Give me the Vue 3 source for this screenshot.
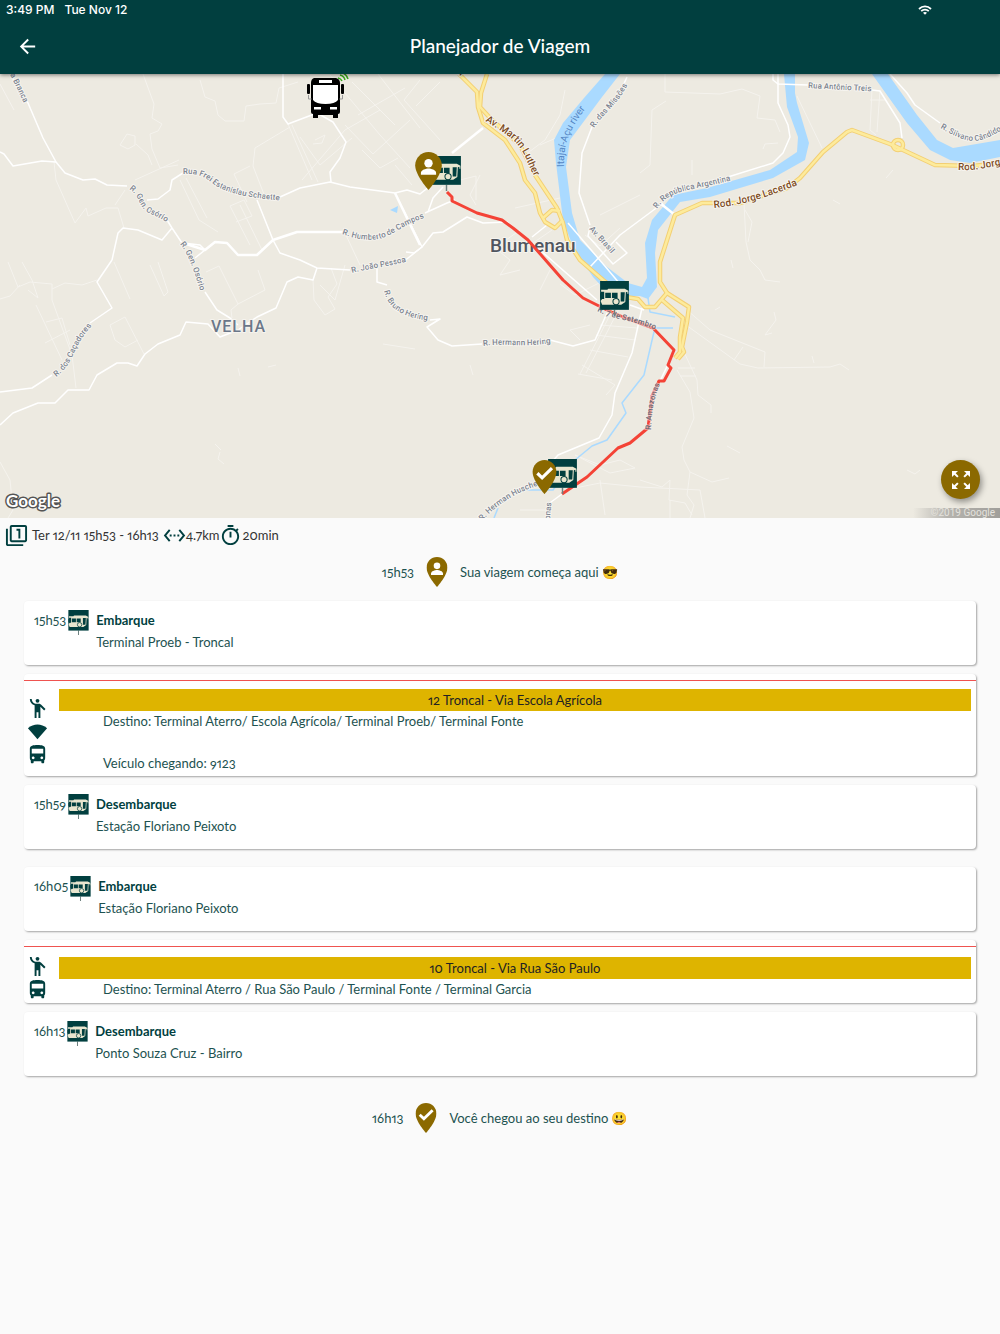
<script setup>
import {ref} from "vue";

const TEAL = '#013f3f'

const summary = ref({date: 'Ter 12/11 15h53 - 16h13', distance: '4.7km', duration: '20min'})

const legs = ref([
  {
    from: {time: '15h53', kind: 'Embarque', place: 'Terminal Proeb - Troncal'},
    line: '12 Troncal - Via Escola Agrícola',
    destination: 'Destino: Terminal Aterro/ Escola Agrícola/ Terminal Proeb/ Terminal Fonte',
    vehicle: 'Veículo chegando: 9123',
    to: {time: '15h59', kind: 'Desembarque', place: 'Estação Floriano Peixoto'},
  },
  {
    from: {time: '16h05', kind: 'Embarque', place: 'Estação Floriano Peixoto'},
    line: '10 Troncal - Via Rua São Paulo',
    destination: 'Destino: Terminal Aterro / Rua São Paulo / Terminal Fonte / Terminal Garcia',
    vehicle: null,
    to: {time: '16h13', kind: 'Desembarque', place: 'Ponto Souza Cruz - Bairro'},
  },
])

const rivers = [
  'M605 74L584 98L563 123L554 140L556 163L563 220L573 247L593 277L605 290L620 296L640 296L648 299L657 287L655 253L658 230L680 202L710 197L773 178L805 160L809 143L797 103L795 93L795 74H784L787 107L798 137L797 152L770 170L707 188L673 195L652 220L645 243L647 278L642 287L628 283L607 267L580 240L572 213L566 167L570 140L602 97L620 74Z',
  'M872 74L907 123L930 150L950 160L970 163L1000 157V140L953 148L937 140L917 115L888 74Z',
  'M390 210L398 206L397 213Z',
]

const streams = [
  'M648 298L650 312L675 317', 'M673 328L655 328L653 336L644 375L622 403L626 413L607 440L592 446L575 460L553 490L527 490', 'M498 508L494 518',
]

// unnamed streets, barely lighter than the ground
const lanes = [
  'M143 74L154 104L152 118L162 124L158 131L150 134L152 149L160 168L178 165',
  'M135 180L179 160', 'M120 145L127 134L135 136L135 145L128 149Z', 'M136 144L148 155L152 165',
  'M54 162L56 180L75 223L86 208L88 216L106 208L118 208L124 228', 'M125 190L115 205',
  'M200 80L205 97L215 101L218 115L225 121H244L246 106L260 104L276 103L279 88L298 82',
  'M288 124L312 180', 'M292 125L318 182', 'M290 127L255 148L253 166L265 197', 'M250 166L234 174L247 202',
  'M180 180L199 220L218 232', 'M186 178L207 218', 'M230 206L250 245', 'M240 205L262 250', 'M230 206L244 200L252 216L236 222',
  'M300 137L320 165L352 138', 'M315 140L325 135L322 143L313 144', 'M302 180L345 130L380 110',
  'M330 75L380 135L410 168', 'M352 82L395 125', 'M358 115L405 88', 'M378 74L420 128', 'M345 125L373 154L410 120',
  'M362 150L380 168L398 158', 'M420 80L404 100L440 140', 'M440 82L416 106', 'M395 165L412 185',
  'M0 84L14 110', 'M8 262L18 287L30 282L52 284L52 300L72 355L76 388', 'M52 289L65 283L82 285L97 280', 'M0 299L10 296L20 285',
  'M36 305L62 360', 'M46 322L62 318L70 345', 'M45 343L70 330', 'M22 262L32 280L38 298L28 290',
  'M110 325L125 317L144 354', 'M110 325L115 340L125 347L138 340', 'M114 262L130 299', 'M150 265L164 296L168 292L158 262',
  'M206 272L219 266L238 304L265 290L258 270', 'M238 304L231 310L232 318', 'M313 280L314 300L325 315L335 309L328 297L337 284L331 268',
  'M345 233L360 265', 'M345 265L335 300L320 285', 'M0 462L10 480L13 510L8 518', 'M215 444L221 450', 'M220 452L218 459L224 464',
  'M238 368L240 376', 'M268 367L276 365', 'M383 344L415 349', 'M470 365L473 375',
  'M580 374L615 305', 'M586 373L620 307', 'M578 374L612 380', 'M582 365L615 385L606 395', 'M590 350L628 357', 'M596 335L635 340', 'M600 325L637 328',
  'M590 325L570 330L580 340', 'M560 284L575 295L605 280', 'M520 230L495 248L510 260L500 275L520 270', 'M550 270L540 290',
  'M565 490L600 483L640 487L700 490L705 518', 'M575 455L600 465L620 460L635 468L610 473Z', 'M600 480L605 515', 'M520 510H550V518',
  'M640 480L662 487L670 480L669 500L685 503L692 515', 'M670 500V518', 'M687 310L710 330L765 352L764 367', 'M686 325L740 364L758 368L830 367L840 364L849 370',
  'M743 347L734 360', 'M812 356L814 363', 'M774 312L776 320L765 335L772 333', 'M715 310L720 307', 'M678 368H695', 'M680 376H696',
  'M677 370L690 392L694 418L682 447L684 460L690 472L687 495L694 505L690 518', 'M684 352L697 380L698 395L711 405V413', 'M690 472L712 482L729 478',
  'M665 74V92L720 94L742 89L760 96L757 118L775 120L780 132', 'M666 101L652 110L650 165L640 173', 'M763 149L765 144L778 143',
  'M797 96L822 148', 'M872 90L870 130L876 135', 'M880 90L877 132', 'M870 100H885', 'M744 203L746 242L750 260L760 270L765 280L780 282', 'M745 210L752 222L748 242',
  'M886 178L893 170', 'M833 200L840 204', 'M692 160V175', 'M731 260L733 268', 'M727 446L740 453', 'M907 470L915 474L920 470',
  'M540 145L556 138', 'M525 155L545 140L560 115L565 90', 'M515 208L560 198', 'M480 175L470 195L476 205', 'M460 180L476 176V200',
  'M552 230L530 245', 'M585 235L600 246L620 228', 'M600 215L640 195',
]

const streets = [
  'M10 74L28 103L43 138L56 162L65 173L83 180L95 179L107 185L127 186', 'M0 152L4 154L13 166L42 161L56 162',
  'M147 200L158 199L170 190L172 180L183 173', 'M280 197L300 188L330 182L350 187L395 193L407 190L420 194L430 186',
  'M283 74V117L288 124L317 113L333 122L346 142L340 158L330 172L331 182', 'M257 200L273 240L280 253L300 260L317 268L350 270',
  'M403 262L422 247L433 233L443 232L467 217L483 223L507 222L540 250L597 300', 'M183 243L200 245L205 250L195 258', 'M167 220L172 228L182 243',
  'M425 213L447 203L455 200', 'M395 193L422 247L414 253L406 252', 'M428 212L433 198L443 187',
  'M112 260L118 233L123 228L138 230L162 240L172 228', 'M112 260L97 282L112 308L90 323', 'M52 375L32 388L0 392',
  'M205 292L217 310L230 318L238 325', 'M317 268L313 280L298 277L287 282L276 308L257 317L238 330L220 337L208 324L186 322L180 335L158 344L145 354L137 366L128 363H117L97 375L89 390H68L55 403H38L13 413L0 425',
  'M377 267V282L387 285', 'M430 320L440 319L427 327L438 340L452 346L482 344', 'M550 340L573 346L595 340L607 313',
  'M642 308L632 353L615 393L612 415L599 438L558 455L545 470', 'M547 505L562 494', 'M627 77L622 88', 'M592 127L582 153L579 193L590 225',
  'M590 267L620 235L663 203', 'M590 227L588 236L613 264L627 253L616 242', 'M728 177L773 163L783 153L790 137L788 125L778 103V74', 'M773 74V80L778 84L808 85',
  'M872 90L880 91L900 123L902 138', 'M890 74L907 93L915 105L940 123', 'M568 223L604 265L625 290', 'M547 225L532 237', 'M660 381L674 352', 'M630 305L644 310',
]

const avenues = [
  'M183 243L205 250L215 242L227 243L238 255H257L273 240L297 232L343 232', 'M395 193L420 245', 'M452 153L483 128', 'M660 203L675 215',
]

const highways = [
  'M459 74L477 92L478 107L483 123L505 140L520 163L525 180L535 193L540 213L545 222L555 228L563 220',
  'M487 74L481 93L480 107L492 120L520 145L535 175L557 208L563 223L567 240L580 260L603 280L626 297L638 299L645 307H655L667 293L660 282V262L675 215L702 203L740 203L787 188L800 178L823 152L847 132L852 130L890 144L903 150L935 165L973 166L1000 163',
  'M543 218L552 210L560 211', 'M667 293L689 307L687 322L682 347L684 352L678 359', 'M662 300L683 318L680 337L680 352L675 358', 'M893 145A5 5 0 1 1 903 145A5 5 0 1 1 893 145',
]

const route = 'M447 192L452 197V201L477 213L502 220L513 228L528 240L563 280L583 298L607 310L623 317L653 328L674 350L668 365L671 368L664 381H659L652 396L648 428L630 443L618 448L587 477L562 494'

const labels = [
  {text: 'ua Branca', d: 'M8 71C14 82 19 92 26 108', kind: 'street'},
  {text: 'R. Gen. Osório', d: 'M129 189C140 196 138 205 147 212C153 216 160 216 172 227', kind: 'street'},
  {text: 'R. Gen. Osório', d: 'M180 244C187 252 193 266 203 300', kind: 'street'},
  {text: 'Rua Frei Estanislau Schaette', d: 'M183 174C200 173 206 178 216 186C234 196 256 198 285 201', kind: 'street'},
  {text: 'R. Humberto de Campos', d: 'M342 234C362 241 378 243 395 232C408 224 418 220 434 214', kind: 'street'},
  {text: 'R. João Pessoa', d: 'M352 273C370 268 388 267 412 260', kind: 'street'},
  {text: 'R. Bruno Hering', d: 'M384 291C388 308 402 320 440 321', kind: 'street'},
  {text: 'R. Hermann Hering', d: 'M483 346C510 342 515 349 560 342', kind: 'street'},
  {text: 'R. dos Caçadores', d: 'M56 377C78 360 70 345 99 319', kind: 'street'},
  {text: 'R. das Missões', d: 'M594 128C606 110 618 106 631 78', kind: 'street'},
  {text: 'Av. Brasil', d: 'M589 229C596 238 603 243 618 262', kind: 'street'},
  {text: 'R. República Argentina', d: 'M657 209C670 188 690 192 740 178', kind: 'street'},
  {text: 'Rua Antônio Treis', d: 'M808 88L885 92', kind: 'street'},
  {text: 'R. Silvano Cândido', d: 'M940 128C975 148 980 144 1016 121', kind: 'street'},
  {text: 'R. Herman Huscher', d: 'M482 521C500 502 518 490 552 482', kind: 'street'},
  {text: 'onas', d: 'M550 520L552 494', kind: 'street'},
  {text: 'R. 7 de Setembro', d: 'M597 311C615 321 637 319 668 336', kind: 'over_route'},
  {text: 'R. Amazonas', d: 'M651 430C652 412 652 400 666 370', kind: 'over_route'},
  {text: 'Av. Martin Luther', d: 'M485 121C510 136 518 142 525 156C530 168 530 168 542 192', kind: 'highway'},
  {text: 'er', d: 'M455 71L472 86', kind: 'highway'},
  {text: 'Rod. Jorge Lacerda', d: 'M714 208C750 204 770 196 810 180', kind: 'highway'},
  {text: 'Rod. Jorge', d: 'M958 170C980 171 990 166 1014 163', kind: 'highway'},
  {text: 'Itajaí-Açu river', d: 'M564 167C563 140 572 126 594 97', kind: 'water'},
]
</script>

<template>
  <!-- shared shapes -->
  <svg class="symbols" aria-hidden="true">
    <symbol id="stop" viewBox="0 0 28 34">
      <path d="M14 28v6" stroke="#6f8280" stroke-width="1.4"/>
      <rect width="28" height="28" :fill="TEAL"/>
      <path d="M1 8.500h6l1-1h16l3.500 2v3h-1v-2l-1.500.500-.500 9.500-4 2.500H2l-1.500-3.500 1.500-2h2V10.500H1z" fill="#e9e6cf"/>
      <path d="M0 12h3v5H0zM5 11.500h5.500v5H5zM11.500 11.500h5.500v5h-5.500zM20 11h4l-.500 9H20z" :fill="TEAL"/>
      <circle cx="15.500" cy="20" r="3" fill="#e9e6cf" :stroke="TEAL"/>
    </symbol>
    <symbol id="pin-person" viewBox="0 0 14 20">
      <path d="M7 0C3.140 0 0 3.140 0 7c0 5.250 7 13 7 13s7-7.750 7-13c0-3.860-3.140-7-7-7z" fill="#8b6900"/>
      <circle cx="7" cy="5.900" r="2.200" fill="#fff"/>
      <path d="M3 12v-1c0-1.500 2.700-2.300 4-2.300s4 .8 4 2.300v1z" fill="#fff"/>
    </symbol>
    <symbol id="pin-check" viewBox="0 0 14 20">
      <path d="M7 0C3.140 0 0 3.140 0 7c0 5.250 7 13 7 13s7-7.750 7-13c0-3.860-3.140-7-7-7z" fill="#8b6900"/>
      <path d="M2.800 7.800l2.800 2.700 5.800-5.700" fill="none" stroke="#fff" stroke-width="1.900"/>
    </symbol>
  </svg>

  <header class="top">
    <div class="status">
      <span>3:49 PM</span>
      <span>Tue Nov 12</span>
      <svg class="wifi" viewBox="0 0 14 10" fill="none" stroke="#fff" stroke-width="1.800">
        <path d="M1 4C4.500.600 9.500.600 13 4M3.200 6.200c2.200-2 5.400-2 7.600 0"/>
        <path d="M7 9.800L5 7.800c1.100-1 2.900-1 4 0z" fill="#fff" stroke="none"/>
      </svg>
    </div>
    <div class="bar">
      <button class="back" type="button" aria-label="Voltar">
        <svg viewBox="0 0 24 24"><path d="M20 11H7.830l5.590-5.590L12 4l-8 8 8 8 1.410-1.410L7.830 13H20v-2z"/></svg>
      </button>
      <h1>Planejador de Viagem</h1>
    </div>
  </header>

  <main>
    <div class="map">
      <svg class="canvas" viewBox="0 74 1000 444">
        <rect y="74" width="1000" height="444" fill="#edeae1"/>
        <path v-for="d in lanes" :key="d" :d="d" class="lane"/>
        <path v-for="d in rivers" :key="d" :d="d" fill="#aadaff"/>
        <path v-for="d in streams" :key="d" :d="d" class="stream"/>
        <path v-for="d in streets" :key="d" :d="d" class="street"/>
        <path v-for="d in avenues" :key="d" :d="d" class="avenue"/>
        <path v-for="d in highways" :key="d" :d="d" class="highway_edge"/>
        <path v-for="d in highways" :key="d" :d="d" class="highway_fill"/>

        <text class="label city" x="490" y="252">Blumenau</text>
        <path :d="route" class="route"/>

        <template v-for="(label, i) in labels" :key="i">
          <path :id="'label' + i" :d="label.d" fill="none"/>
          <text :class="['label', label.kind]"><textPath :href="'#label' + i">{{ label.text }}</textPath></text>
        </template>
        <text class="label district" x="211" y="332">VELHA</text>
        <text class="google" x="6" y="507">Google</text>

        <!-- vehicle -->
        <g>
          <path d="M314 78h22q4 1 4 5v29q0 2-2 2v4h-5v-3h-15v3h-5v-4q-2 0-2-2V83q0-4 3-5z"/>
          <rect x="307" y="84" width="3" height="10" rx="1"/>
          <rect x="341" y="84" width="3" height="10" rx="1"/>
          <path d="M308.500 95v4h3M342.500 95v4h-3" fill="none" stroke="#999"/>
          <rect x="319" y="80" width="13" height="3" fill="#fff"/>
          <path d="M313 85h25v15q-3 4-12.500 4t-12.500-4z" fill="#fff"/>
          <path d="M314 107h7v2.500h-7zM330 107h7v2.500h-7z" fill="#fff"/>
          <path d="M338 78q3 .5 4 3M340 75q4 1 5 5M343 73q4 2 5 6" fill="none" stroke="#38a91b" stroke-width="1.500"/>
        </g>
        <use href="#stop" x="432" y="156" width="29" height="35"/>
        <use href="#pin-person" x="415" y="152" width="27" height="38"/>
        <use href="#stop" x="600" y="281" width="29" height="35"/>
        <use href="#stop" x="548" y="459" width="29" height="35"/>
        <use href="#pin-check" x="532" y="460" width="25" height="34"/>
      </svg>
      <small class="copyright">©2019 Google</small>
      <button class="expand" type="button" aria-label="Expandir mapa">
        <svg viewBox="0 0 24 24"><path d="M15 3l2.300 2.300-2.890 2.870 1.420 1.420L18.700 6.700 21 9V3zM3 9l2.300-2.300 2.870 2.890 1.420-1.420L6.700 5.300 9 3H3zm6 12l-2.300-2.300 2.890-2.870-1.420-1.420L5.300 17.300 3 15v6zm12-6l-2.300 2.300-2.870-2.890-1.420 1.420 2.890 2.870L15 21h6z"/></svg>
      </button>
    </div>

    <div class="summary">
      <svg viewBox="0 0 24 24"><path d="M3 5H1v16c0 1.100.9 2 2 2h16v-2H3V5zm11 10h2V5h-4v2h2v8zm7-14H7c-1.100 0-2 .9-2 2v14c0 1.100.9 2 2 2h14c1.100 0 2-.9 2-2V3c0-1.100-.9-2-2-2zm0 16H7V3h14v14z"/></svg>
      <span class="date">{{ summary.date }}</span>
      <svg viewBox="0 0 24 24"><path d="M7.770 6.760L6.230 5.480.820 12l5.410 6.520 1.540-1.280L3.420 12l4.350-5.240zM7 13h2v-2H7v2zm10-2h-2v2h2v-2zm-6 2h2v-2h-2v2zm6.770-7.520l-1.540 1.280L20.580 12l-4.350 5.240 1.540 1.280L23.180 12l-5.410-6.520z"/></svg>
      <span>{{ summary.distance }}</span>
      <svg viewBox="0 0 24 24"><path d="M15 1H9v2h6V1zm-4 13h2V8h-2v6zm8.030-6.610l1.420-1.420c-.43-.51-.9-.99-1.410-1.410l-1.420 1.420C16.070 4.740 14.120 4 12 4c-4.970 0-9 4.030-9 9s4.020 9 9 9 9-4.030 9-9c0-2.120-.74-4.070-1.970-5.610zM12 20c-3.870 0-7-3.130-7-7s3.130-7 7-7 7 3.130 7 7-3.130 7-7 7z"/></svg>
      <span>{{ summary.duration }}</span>
    </div>

    <div class="endpoint">
      <span class="time">15h53</span>
      <svg viewBox="0 0 14 20"><use href="#pin-person"/></svg>
      <span>Sua viagem começa aqui 😎</span>
    </div>

    <section v-for="leg in legs" :key="leg.line" class="leg">
      <div class="card stop">
        <span class="time">{{ leg.from.time }}</span>
        <svg viewBox="0 0 28 34"><use href="#stop"/></svg>
        <div>
          <strong>{{ leg.from.kind }}</strong>
          <p>{{ leg.from.place }}</p>
        </div>
      </div>

      <div class="card ride">
        <div class="ride_body">
          <div class="ride_icons">
            <svg viewBox="0 0 24 24"><circle cx="12" cy="4" r="2"/><path d="M15.890 8.110C15.500 7.720 14.830 7 13.530 7h-2.540C8.240 6.990 6 4.750 6 2H4c0 3.160 2.110 5.840 5 6.710V22h2v-6h2v6h2V10.050L18.950 14l1.410-1.410-4.470-4.480z"/></svg>
            <svg v-if="leg.vehicle" viewBox="0 0 24 24"><path d="M2 8.500C8 3.500 16 3.500 22 8.500L12 20z"/></svg>
            <svg viewBox="0 0 24 24"><path d="M4 16c0 .88.39 1.670 1 2.220V20c0 .55.45 1 1 1h1c.55 0 1-.45 1-1v-1h8v1c0 .55.45 1 1 1h1c.55 0 1-.45 1-1v-1.780c.61-.55 1-1.340 1-2.220V6c0-3.500-3.580-4-8-4s-8 .5-8 4v10zm3.500 1c-.83 0-1.500-.67-1.500-1.500S6.670 14 7.500 14s1.500.67 1.500 1.500S8.330 17 7.500 17zm9 0c-.83 0-1.500-.67-1.500-1.500s.67-1.500 1.500-1.500 1.500.67 1.500 1.500-.67 1.500-1.500 1.500zm1.500-6H6V6h12v5z"/></svg>
          </div>
          <div class="ride_text">
            <div class="line_name">{{ leg.line }}</div>
            <p>{{ leg.destination }}</p>
            <p v-if="leg.vehicle" class="vehicle">{{ leg.vehicle }}</p>
          </div>
        </div>
      </div>

      <div class="card stop">
        <span class="time">{{ leg.to.time }}</span>
        <svg viewBox="0 0 28 34"><use href="#stop"/></svg>
        <div>
          <strong>{{ leg.to.kind }}</strong>
          <p>{{ leg.to.place }}</p>
        </div>
      </div>
    </section>

    <div class="endpoint last">
      <span class="time">16h13</span>
      <svg viewBox="0 0 14 20"><use href="#pin-check"/></svg>
      <span>Você chegou ao seu destino 😃</span>
    </div>
  </main>
</template>

<style>
body {
  background: #fafafa;
  color: #1d5250;
  font: 13px/21px Lato, "Noto Sans", "Noto Color Emoji", sans-serif;
  font-variant-numeric: oldstyle-nums proportional-nums;
}
</style>

<style scoped>
h1, p {
  margin: 0;
}

button {
  padding: 0;
  border: 0;
  cursor: pointer;
}

.symbols {
  position: absolute;
  width: 0;
  height: 0;
}

.top {
  position: relative;
  z-index: 1;
  background: #013f3f;
  color: #fff;
  box-shadow: 0 1px 4px rgba(0, 0, 0, 0.5);
}

.status {
  display: flex;
  align-items: center;
  gap: 10px;
  height: 20px;
  padding: 0 68px 0 6px;
  font: 500 12px/20px Inter, sans-serif;
}

.wifi {
  width: 14px;
  height: 10px;
  margin-left: auto;
}

.bar {
  display: grid;
  grid-template-columns: 54px 1fr 54px;
  align-items: center;
  height: 54px;
}

.back {
  height: 24px;
  background: none;
}

.back svg {
  width: 23px;
  height: 23px;
  fill: #fff;
}

h1 {
  padding-bottom: 2px;
  text-align: center;
  font-size: 19px;
  line-height: 28px;
  font-weight: 500;
}

/* map */
.map {
  position: relative;
}

.canvas {
  display: block;
  width: 100%;
}

.canvas path {
  stroke-linejoin: round;
}

.lane {
  fill: none;
  stroke: #f5f3ee;
  stroke-width: 1;
}

.stream {
  fill: none;
  stroke: #aadaff;
  stroke-width: 1.5;
}

.street {
  fill: none;
  stroke: #fff;
  stroke-width: 1.5;
}

.avenue {
  fill: none;
  stroke: #fff;
  stroke-width: 2.5;
}

.highway_edge {
  fill: none;
  stroke: #f3cf73;
  stroke-width: 4.5;
}

.highway_fill {
  fill: none;
  stroke: #fdeb9c;
  stroke-width: 2.5;
}

.route {
  fill: none;
  stroke: #f44336;
  stroke-width: 3;
}

.label {
  font-family: Roboto, sans-serif;
  font-size: 8px;
  font-weight: 500;
  fill: #7b8390;
  stroke: #f6f4ef;
  stroke-width: 2px;
  stroke-linejoin: round;
  paint-order: stroke;
}

.label.over_route {
  stroke: rgba(246, 244, 239, 0.5);
  fill: #6d6a76;
}

.label.highway {
  font-size: 10px;
  fill: #7d4b1c;
}

.label.water {
  font-size: 10px;
  font-weight: 400;
  fill: #5485c4;
  stroke: none;
}

.label.city {
  font-size: 19px;
  fill: #50565f;
}

.label.district {
  font-size: 16px;
  letter-spacing: 1px;
  fill: #6b7789;
}

.google {
  font: 700 17px Lato, sans-serif;
  fill: #fff;
  stroke: #555;
  stroke-width: 3px;
  stroke-linejoin: round;
  paint-order: stroke;
}

.copyright {
  position: absolute;
  right: 0;
  bottom: 0;
  padding: 0 5px 0 18px;
  background: linear-gradient(to right, rgba(150, 150, 150, 0), #b5b3ae 40%, #a09e9a);
  color: #e4e2dd;
  font: 10px/10px Roboto, sans-serif;
}

.expand {
  position: absolute;
  right: 20px;
  bottom: 19px;
  display: grid;
  place-items: center;
  width: 39px;
  height: 39px;
  border-radius: 50%;
  background: #8b6900;
  box-shadow: 2px 3px 6px rgba(0, 0, 0, 0.4);
}

.expand svg {
  width: 24px;
  height: 24px;
  fill: #fff;
}

/* trip */
.summary {
  display: flex;
  align-items: center;
  height: 34px;
  padding: 0 5px;
  color: #333;
}

.summary svg {
  width: 23px;
  height: 23px;
  fill: #013f3f;
}

.date {
  margin: 0 4px;
}

.endpoint {
  display: flex;
  justify-content: center;
  align-items: center;
  gap: 12px;
  height: 40px;
}

.endpoint svg {
  width: 22px;
  height: 30px;
}

.endpoint.last {
  margin-top: 22px;
}

.leg {
  display: grid;
  gap: 9px;
  margin: 9px 24px 18px;
}

.card {
  border-radius: 4px;
  background: #fff;
  box-shadow: 1px 1px 2px rgba(0, 0, 0, 0.35);
}

.stop {
  display: flex;
  align-items: flex-start;
  padding: 8px 10px 12px;
  line-height: 22px;
}

.stop svg {
  width: 21px;
  height: 25px;
  margin: 1px 7px 0 2px;
}

.stop strong {
  color: #013f3f;
}

.ride {
  padding-top: 6px;
}

.ride_body {
  display: flex;
  align-items: center;
  gap: 10px;
  padding: 8px 5px 2px 2px;
  border-top: 1px solid #ef5350;
}

.ride_icons {
  display: grid;
}

.ride_icons svg {
  width: 23px;
  height: 23px;
  fill: #013f3f;
}

.ride_text {
  flex: 1;
}

.line_name {
  background: #deb400;
  color: #222;
  line-height: 22px;
  text-align: center;
}

.ride_text p {
  padding-left: 44px;
}

.ride_text .vehicle {
  margin-top: 21px;
}
</style>
